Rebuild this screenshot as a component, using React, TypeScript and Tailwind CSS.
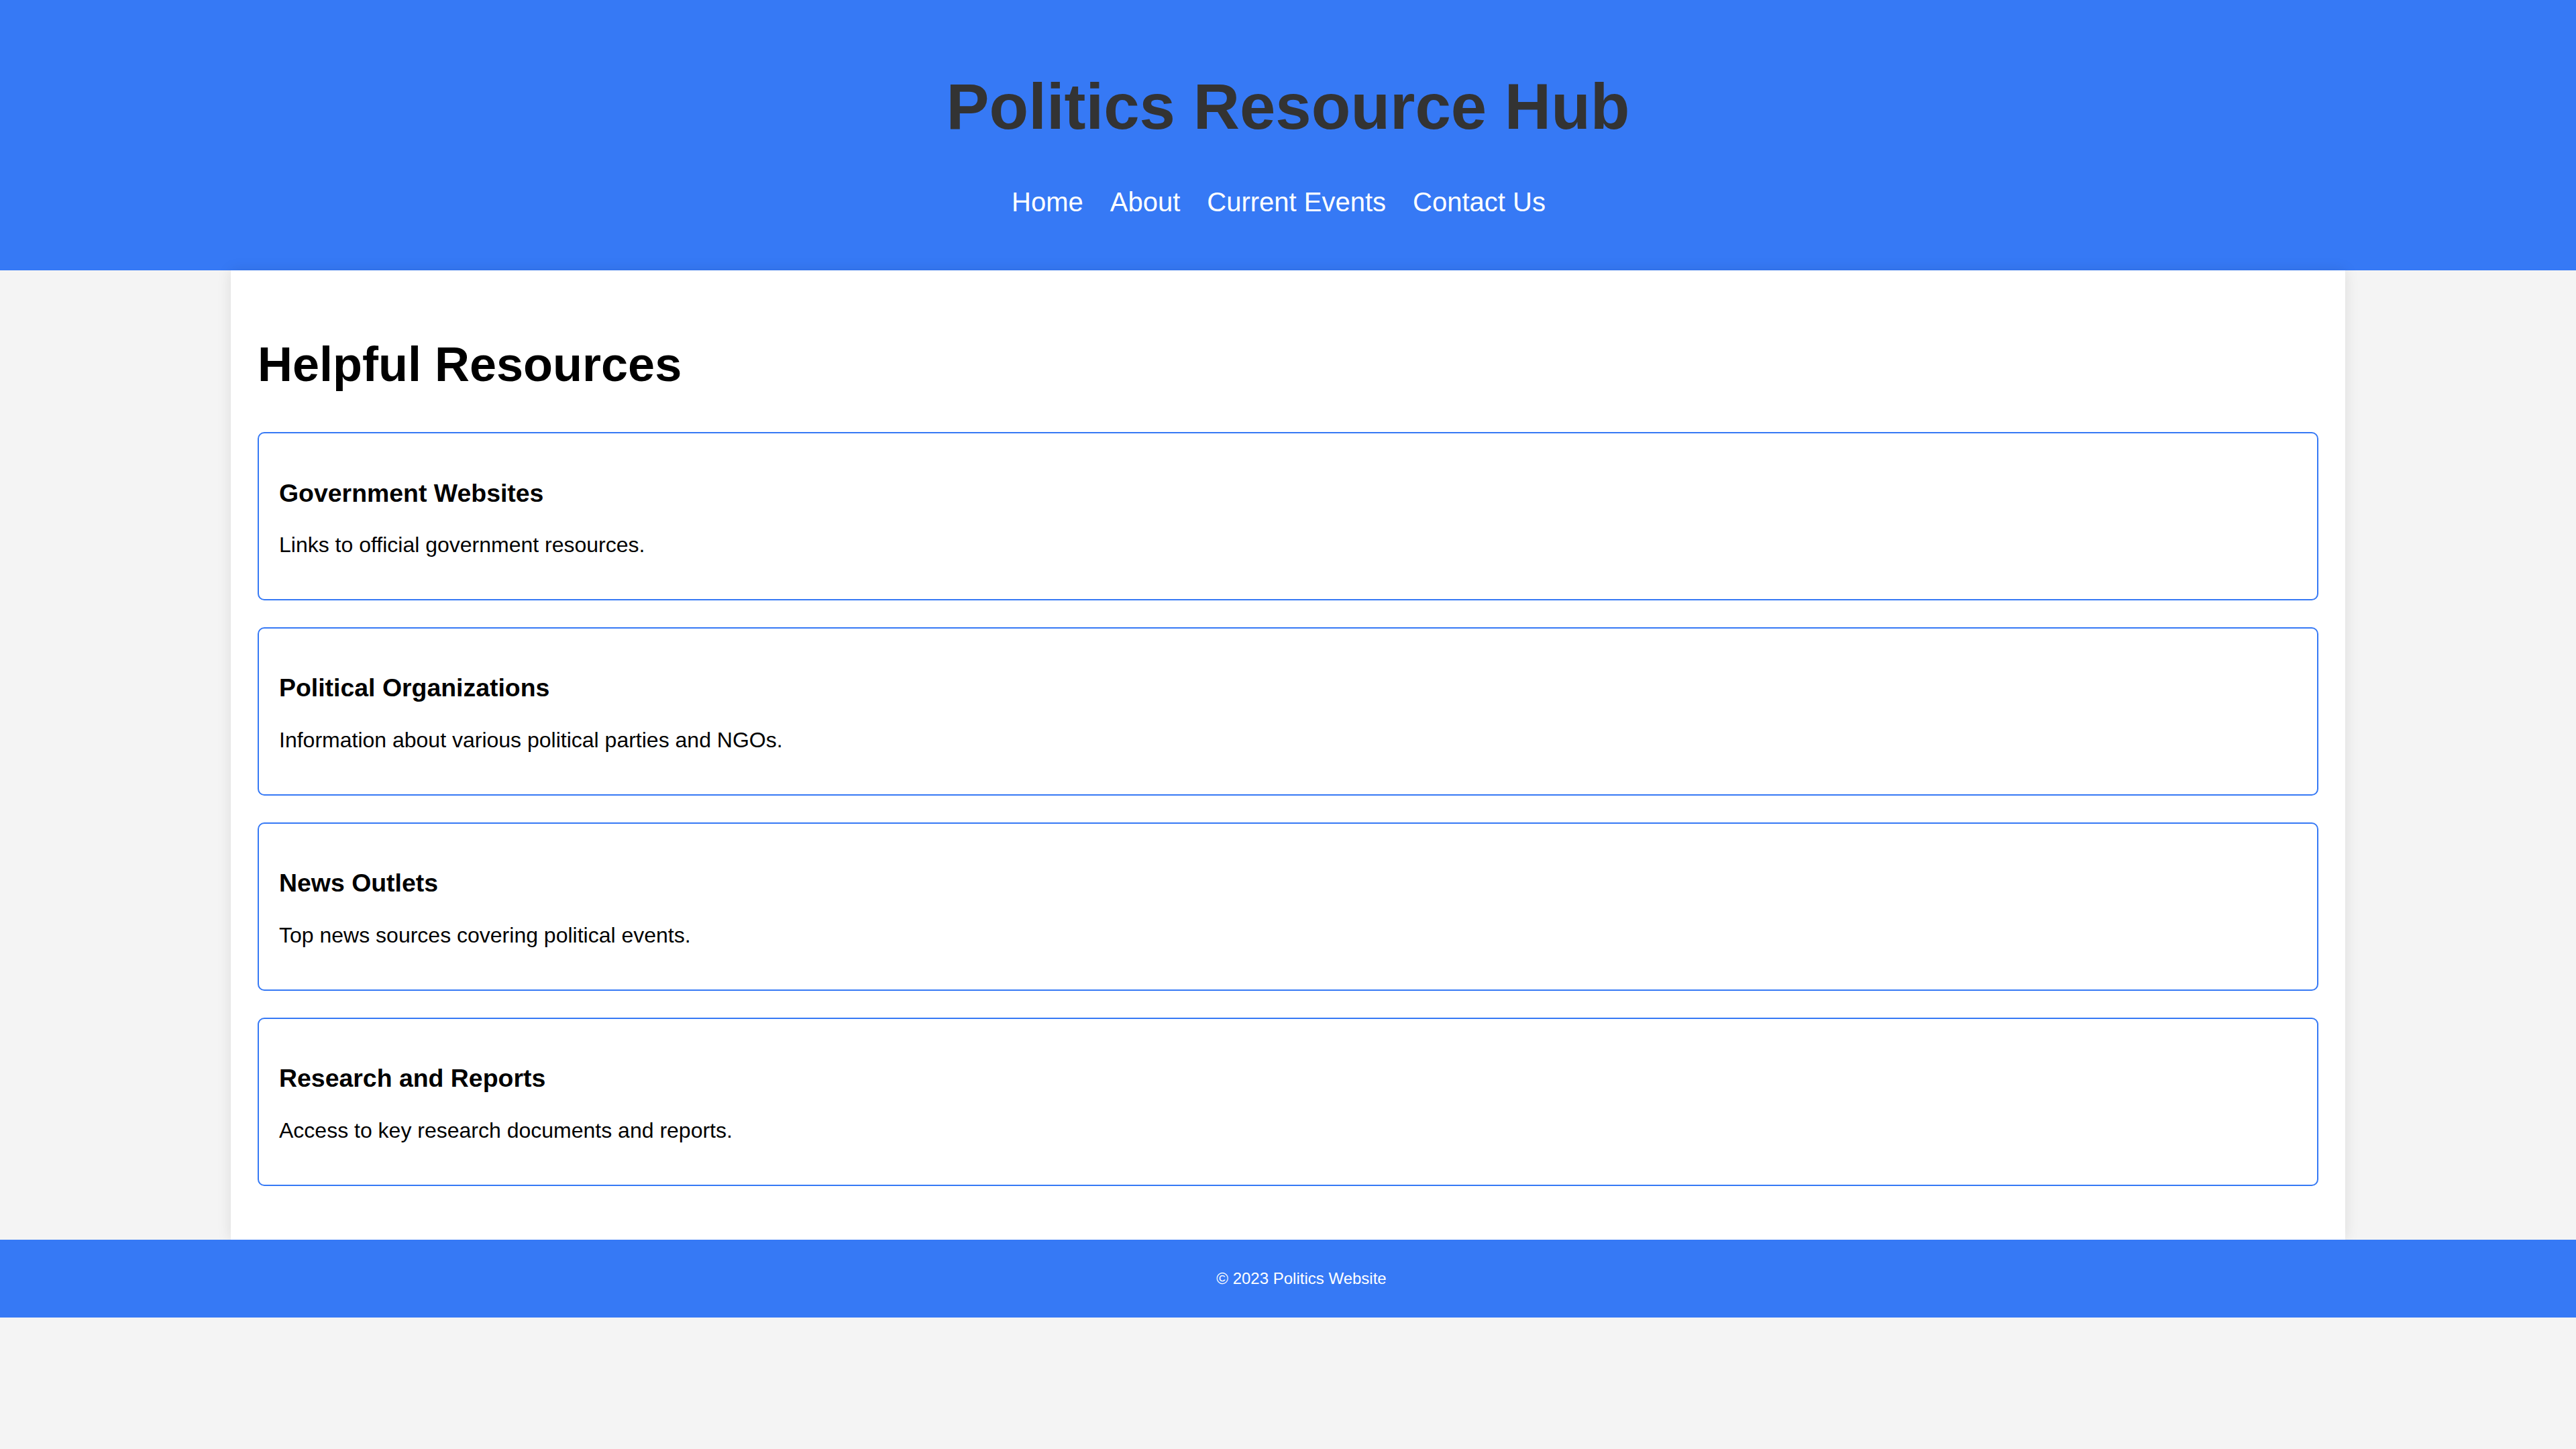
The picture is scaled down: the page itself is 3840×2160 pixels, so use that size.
const navLinks = ["Home", "About", "Current Events", "Contact Us"];

const resources = [
  {
    title: "Government Websites",
    text: "Links to official government resources.",
  },
  {
    title: "Political Organizations",
    text: "Information about various political parties and NGOs.",
  },
  {
    title: "News Outlets",
    text: "Top news sources covering political events.",
  },
  {
    title: "Research and Reports",
    text: "Access to key research documents and reports.",
  },
];

function App() {
  return (
    <div className="min-h-screen bg-[#f4f4f4] font-['Liberation_Sans',Arial,sans-serif]">
      {/* header */}
      <header className="bg-[#3679f5] pt-[40px] pb-[79px] text-center">
        <h1 className="text-[96px] font-bold leading-[normal] text-[#333] my-[64.32px]">
          Politics Resource Hub
        </h1>
        {/* nav links */}
        <nav>
          <ul className="flex justify-center pl-[12px]">
            {navLinks.map((link) => (
              <li key={link} className="mr-[40px]">
                <a href="#" className="text-[40px] leading-[normal] text-white">
                  {link}
                </a>
              </li>
            ))}
          </ul>
        </nav>
      </header>

      {/* main content */}
      <main className="box-content w-[80%] mx-auto bg-white p-[40px] shadow-[0_0_20px_rgba(0,0,0,0.1)]">
        <h2 className="text-[72px] font-bold leading-[normal] text-black my-[59.76px]">
          Helpful Resources
        </h2>
        {resources.map((item) => (
          <section
            key={item.title}
            className="border-2 border-[#3679f5] rounded-[10px] p-[30px] mb-[40px] bg-white text-black"
          >
            <h3 className="text-[37.44px] font-bold leading-[normal] my-[37.44px]">
              {item.title}
            </h3>
            <p className="text-[32px] leading-[normal] my-[32px]">{item.text}</p>
          </section>
        ))}
      </main>

      {/* footer */}
      <footer className="bg-[#3679f5] py-[20px] pl-[40px] text-center text-white">
        <p className="text-[24px] leading-[normal] my-[24px]">© 2023 Politics Website</p>
      </footer>
    </div>
  );
}

export default App;
